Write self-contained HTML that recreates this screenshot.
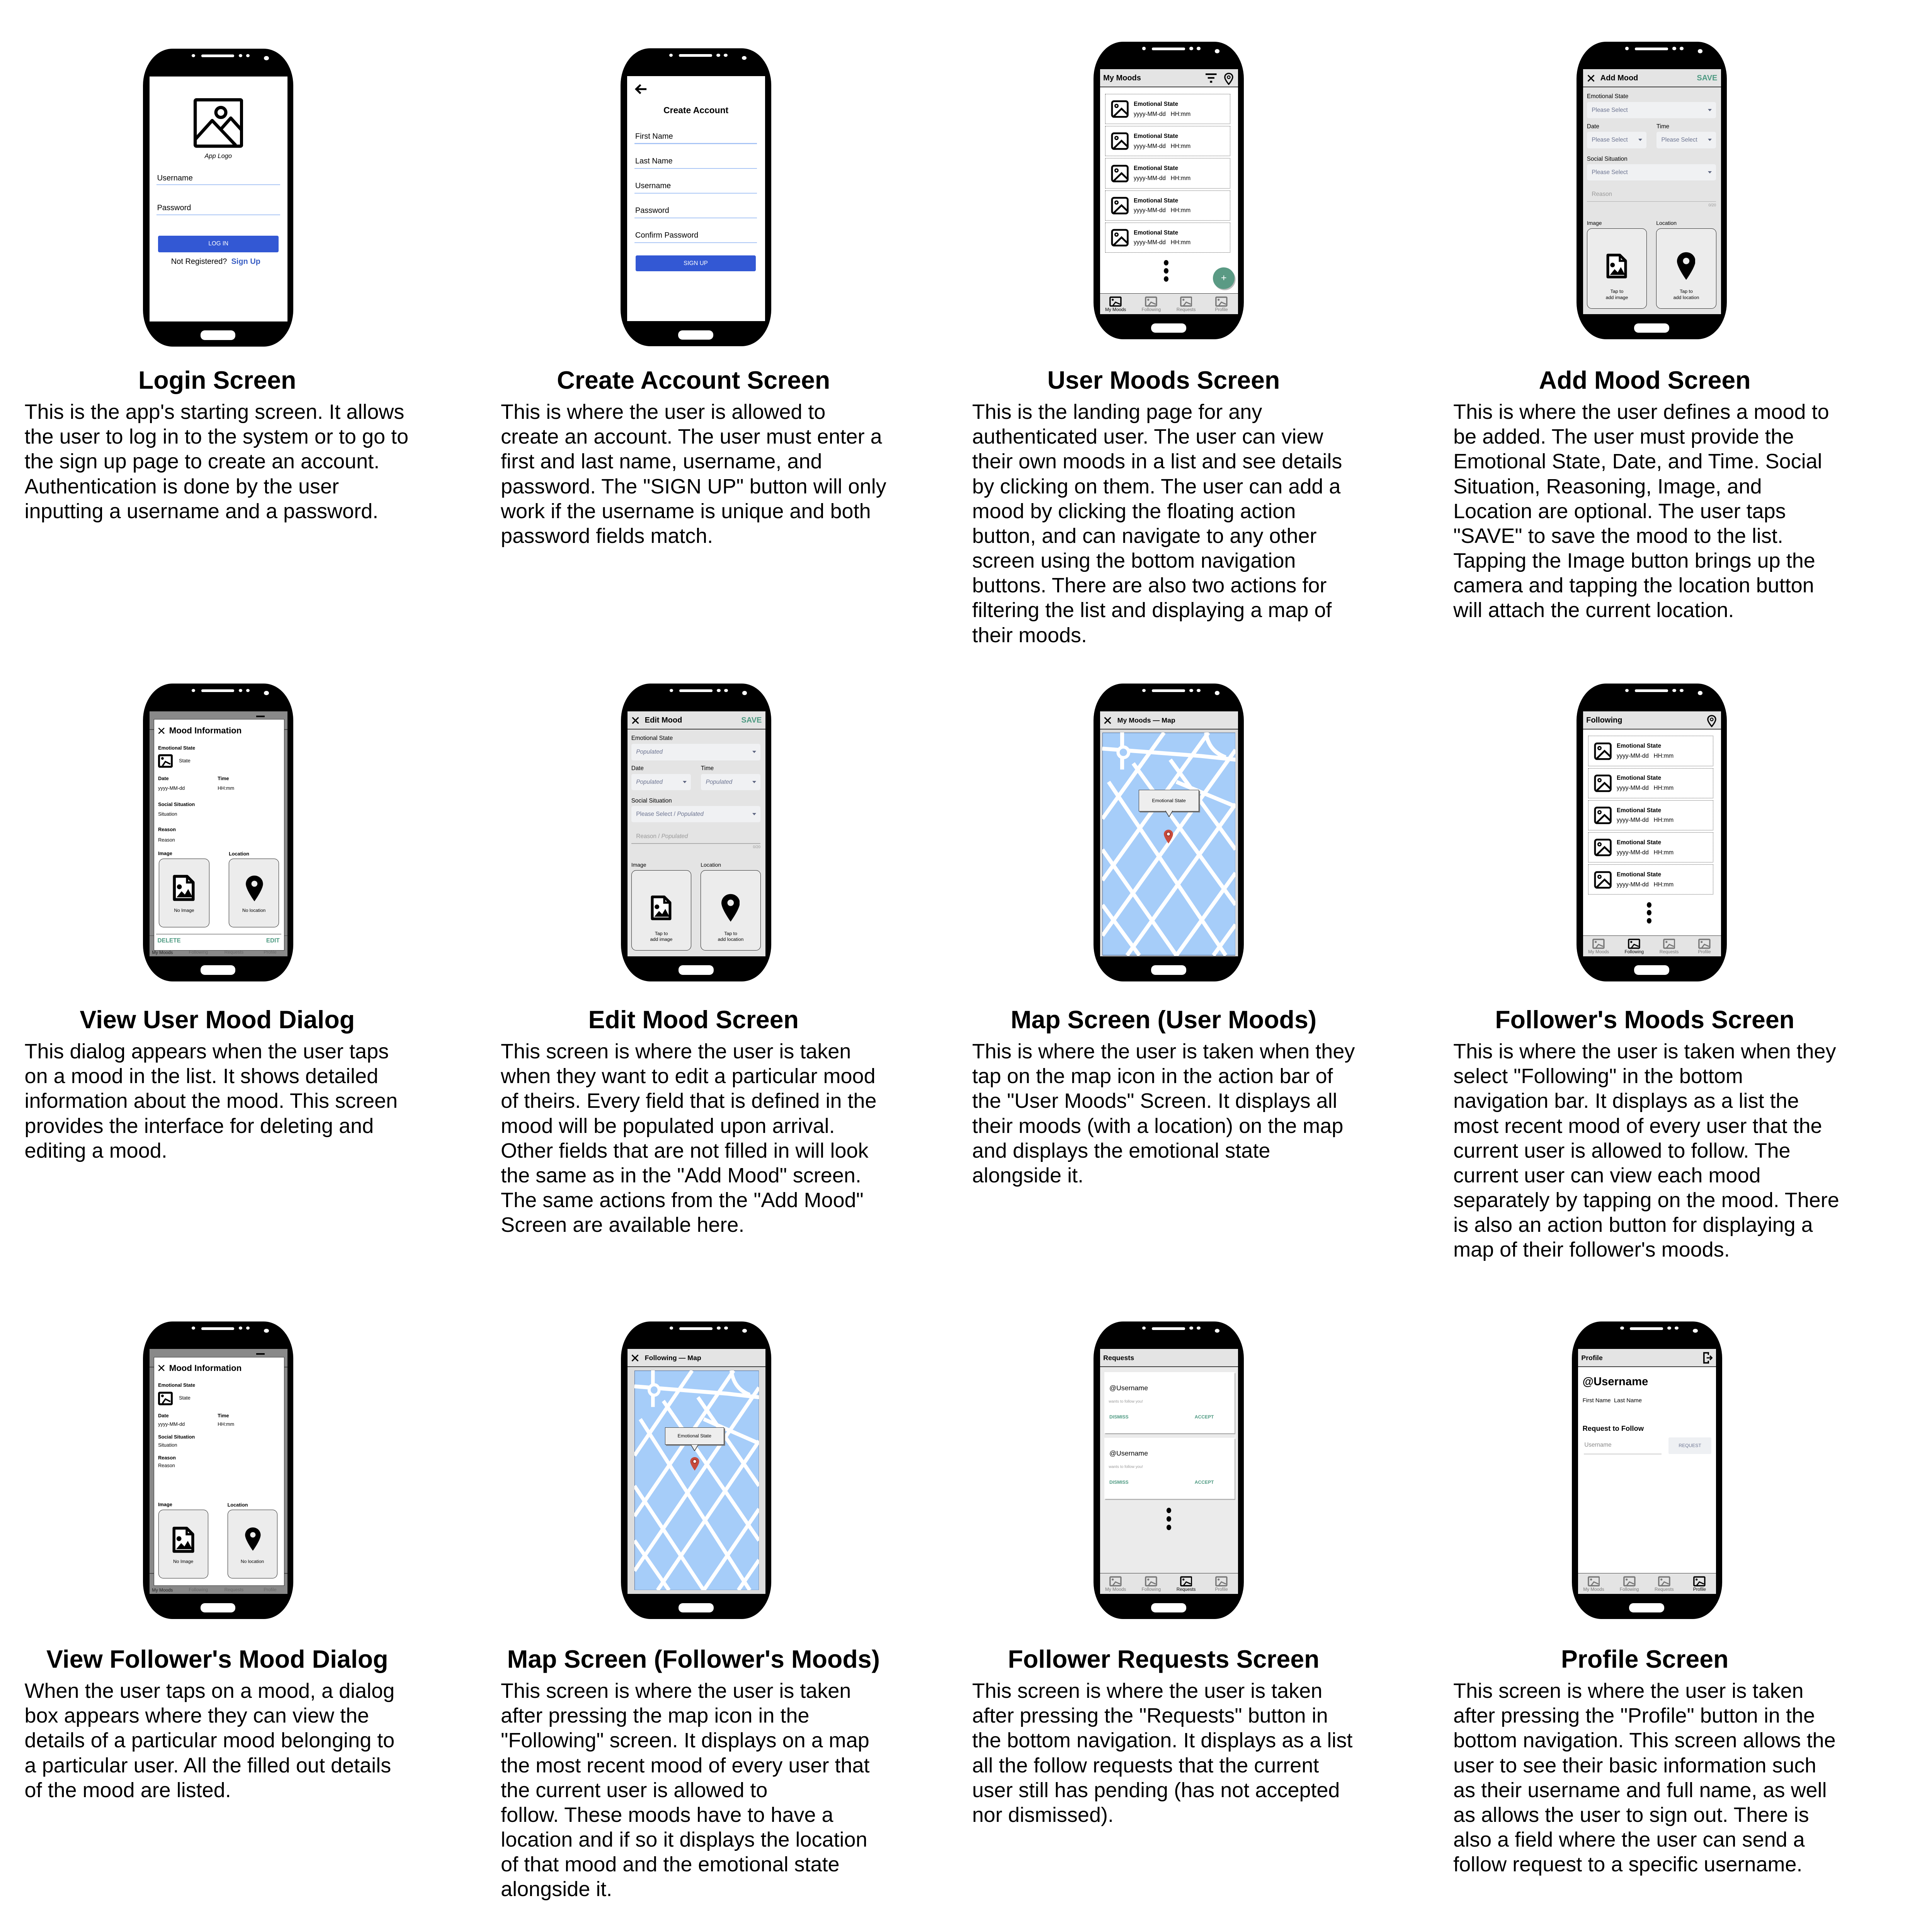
<!DOCTYPE html>
<html><head><meta charset="utf-8"><style>
*{margin:0;padding:0;box-sizing:border-box}
html,body{width:100vw;height:100vh;overflow:hidden;background:#fff}
body{font-family:"Liberation Sans",Arial,sans-serif;position:relative;color:#000}
#s{position:absolute;left:0;top:0;width:1530px;height:1574px;zoom:3.694118;overflow:hidden}
.a{position:absolute}
.x{position:absolute;line-height:1.2;white-space:nowrap}
.t{position:absolute;font-weight:bold;font-size:20.3px;line-height:24px;white-space:nowrap;transform:translateX(-50%)}
.b{position:absolute;font-size:17px;line-height:20.2px;white-space:nowrap}
.ph{position:absolute;width:122.5px;height:242.5px;background:#000;border-radius:24px/30px}
.sc{position:absolute;left:5.3px;top:22.5px;width:112.3px;height:199.5px;background:#fff;overflow:hidden}
.w{position:absolute;background:#fff}
.hd{position:absolute;left:0;top:0;width:100%;height:14.8px;background:#e4e4e4;border-bottom:.7px solid #333}
.ht{position:absolute;top:0;font-weight:bold;font-size:6.3px;line-height:14.8px;white-space:nowrap}
.it{position:absolute;left:4px;width:102px;height:24.6px;border:.45px dotted #333}
.it svg{position:absolute;left:4.3px;top:4.8px;width:14.6px;height:14.6px}
.it .e{position:absolute;left:23px;top:5.3px;font-size:4.8px;font-weight:bold;white-space:nowrap}
.it .y{position:absolute;left:23px;top:13.4px;font-size:4.8px;white-space:nowrap}
.nv{position:absolute;left:0;top:182.5px;width:100%;height:17px;background:#e4e4e4;border-top:.6px solid #333}
.ni{position:absolute;top:2.2px;width:10px;height:8.5px}
.nl{position:absolute;top:11px;font-size:3.7px;white-space:nowrap;transform:translateX(-50%);color:#777}
.dt{position:absolute;width:3.8px;height:4.4px;background:#000;border-radius:50%}
.sel{position:absolute;background:#f0f1f3;border-radius:1.5px}
.sel span{position:absolute;left:4px;top:50%;transform:translateY(-50%);font-size:4.8px;color:#6b7390;white-space:nowrap}
.sel i{position:absolute;right:3.5px;top:50%;margin-top:-1px;width:0;height:0;border-left:1.8px solid transparent;border-right:1.8px solid transparent;border-top:2.2px solid #5d6580}
.bx{position:absolute;background:#ececec;border:.5px solid #222;border-radius:4px}
.g{color:#4e9a82;font-weight:bold}
.lb{position:absolute;font-size:4.8px;white-space:nowrap;line-height:1.2}
</style></head><body><div id="s">

<div class="t" style="left:177px;top:297.8px">Login Screen</div>
<div class="t" style="left:565px;top:297.8px">Create Account Screen</div>
<div class="t" style="left:948px;top:297.8px">User Moods Screen</div>
<div class="t" style="left:1340px;top:297.8px">Add Mood Screen</div>

<div class="b" style="left:20px;top:325.5px">This is the app's starting screen. It allows<br>the user to log in to the system or to go to<br>the sign up page to create an account.<br>Authentication is done by the user<br>inputting a username and a password.</div>
<div class="b" style="left:408px;top:325.5px">This is where the user is allowed to<br>create an account. The user must enter a<br>first and last name, username, and<br>password. The "SIGN UP" button will only<br>work if the username is unique and both<br>password fields match.</div>
<div class="b" style="left:792px;top:325.5px">This is the landing page for any<br>authenticated user. The user can view<br>their own moods in a list and see details<br>by clicking on them. The user can add a<br>mood by clicking the floating action<br>button, and can navigate to any other<br>screen using the bottom navigation<br>buttons. There are also two actions for<br>filtering the list and displaying a map of<br>their moods.</div>
<div class="b" style="left:1184px;top:325.5px">This is where the user defines a mood to<br>be added. The user must provide the<br>Emotional State, Date, and Time. Social<br>Situation, Reasoning, Image, and<br>Location are optional. The user taps<br>"SAVE" to save the mood to the list.<br>Tapping the Image button brings up the<br>camera and tapping the location button<br>will attach the current location.</div>

<div class="t" style="left:177px;top:818.8px">View User Mood Dialog</div>
<div class="t" style="left:565px;top:818.8px">Edit Mood Screen</div>
<div class="t" style="left:948px;top:818.8px">Map Screen (User Moods)</div>
<div class="t" style="left:1340px;top:818.8px">Follower's Moods Screen</div>

<div class="b" style="left:20px;top:846.5px">This dialog appears when the user taps<br>on a mood in the list. It shows detailed<br>information about the mood. This screen<br>provides the interface for deleting and<br>editing a mood.</div>
<div class="b" style="left:408px;top:846.5px">This screen is where the user is taken<br>when they want to edit a particular mood<br>of theirs. Every field that is defined in the<br>mood will be populated upon arrival.<br>Other fields that are not filled in will look<br>the same as in the "Add Mood" screen.<br>The same actions from the "Add Mood"<br>Screen are available here.</div>
<div class="b" style="left:792px;top:846.5px">This is where the user is taken when they<br>tap on the map icon in the action bar of<br>the "User Moods" Screen. It displays all<br>their moods (with a location) on the map<br>and displays the emotional state<br>alongside it.</div>
<div class="b" style="left:1184px;top:846.5px">This is where the user is taken when they<br>select "Following" in the bottom<br>navigation bar. It displays as a list the<br>most recent mood of every user that the<br>current user is allowed to follow. The<br>current user can view each mood<br>separately by tapping on the mood. There<br>is also an action button for displaying a<br>map of their follower's moods.</div>

<div class="t" style="left:177px;top:1339.8px">View Follower's Mood Dialog</div>
<div class="t" style="left:565px;top:1339.8px">Map Screen (Follower's Moods)</div>
<div class="t" style="left:948px;top:1339.8px">Follower Requests Screen</div>
<div class="t" style="left:1340px;top:1339.8px">Profile Screen</div>

<div class="b" style="left:20px;top:1367.5px">When the user taps on a mood, a dialog<br>box appears where they can view the<br>details of a particular mood belonging to<br>a particular user. All the filled out details<br>of the mood are listed.</div>
<div class="b" style="left:408px;top:1367.5px">This screen is where the user is taken<br>after pressing the map icon in the<br>"Following" screen. It displays on a map<br>the most recent mood of every user that<br>the current user is allowed to<br>follow. These moods have to have a<br>location and if so it displays the location<br>of that mood and the emotional state<br>alongside it.</div>
<div class="b" style="left:792px;top:1367.5px">This screen is where the user is taken<br>after pressing the "Requests" button in<br>the bottom navigation. It displays as a list<br>all the follow requests that the current<br>user still has pending (has not accepted<br>nor dismissed).</div>
<div class="b" style="left:1184px;top:1367.5px">This screen is where the user is taken<br>after pressing the "Profile" button in the<br>bottom navigation. This screen allows the<br>user to see their basic information such<br>as their username and full name, as well<br>as allows the user to sign out. There is<br>also a field where the user can send a<br>follow request to a specific username.</div>

<!-- PHONE 1: LOGIN -->
<div class="ph" style="left:116.5px;top:39.8px">
<div class="w" style="left:39.5px;top:4.2px;width:3px;height:2.6px;border-radius:50%"></div><div class="w" style="left:47.4px;top:4.7px;width:27px;height:2.2px;border-radius:1px"></div><div class="w" style="left:78px;top:4.2px;width:3px;height:2.6px;border-radius:50%"></div><div class="w" style="left:84px;top:4.2px;width:3px;height:2.6px;border-radius:50%"></div><div class="w" style="left:98.6px;top:6px;width:4px;height:3.4px;border-radius:50%"></div>
<div class="w" style="left:46.8px;top:229.5px;width:28.5px;height:7.6px;border-radius:3.5px"></div>
<div class="sc">
 <svg class="a" style="left:35.8px;top:17.7px;width:40.4px;height:40.5px" viewBox="0 0 40 40"><rect x="1.3" y="1.3" width="37.4" height="37.4" rx="1" fill="none" stroke="#000" stroke-width="2.6"/><circle cx="22" cy="11.5" r="4" fill="none" stroke="#000" stroke-width="2.6"/><path d="M1.5 33L15 18l19 20M22 25l8-9 9 10" fill="none" stroke="#000" stroke-width="2.6" stroke-linejoin="round"/></svg>
 <div class="x" style="left:0;width:112px;text-align:center;top:62.2px;font-size:5.2px;font-style:italic">App Logo</div>
 <div class="x" style="left:6.2px;top:78.9px;font-size:6.3px">Username</div>
 <div class="a" style="left:5.7px;top:87.8px;width:100.8px;height:.7px;background:#a7c4f5"></div>
 <div class="x" style="left:6.2px;top:103.2px;font-size:6.3px">Password</div>
 <div class="a" style="left:5.7px;top:112.5px;width:100.8px;height:.7px;background:#a7c4f5"></div>
 <div class="a" style="left:7px;top:129.7px;width:98.3px;height:13.5px;background:#3358d4;border-radius:1.2px;color:#fff;font-size:4.8px;text-align:center;line-height:13.5px">LOG IN</div>
 <div class="x" style="left:17.6px;top:147px;font-size:6.3px">Not Registered?&nbsp; <span style="color:#3a5fc4;font-weight:bold">Sign Up</span></div>
</div></div>

<!-- PHONE 2: CREATE ACCOUNT -->
<div class="ph" style="left:505.7px;top:39.5px">
<div class="w" style="left:39.5px;top:4.2px;width:3px;height:2.6px;border-radius:50%"></div><div class="w" style="left:47.4px;top:4.7px;width:27px;height:2.2px;border-radius:1px"></div><div class="w" style="left:78px;top:4.2px;width:3px;height:2.6px;border-radius:50%"></div><div class="w" style="left:84px;top:4.2px;width:3px;height:2.6px;border-radius:50%"></div><div class="w" style="left:98.6px;top:6px;width:4px;height:3.4px;border-radius:50%"></div>
<div class="w" style="left:46.8px;top:229.5px;width:28.5px;height:7.6px;border-radius:3.5px"></div>
<div class="sc">
 <svg class="a" style="left:6px;top:6.2px;width:10px;height:8.6px" viewBox="0 0 10 9"><path d="M10 4.5H2M5 .8L1.2 4.5 5 8.2" fill="none" stroke="#000" stroke-width="1.6"/></svg>
 <div class="x" style="left:0;width:112px;text-align:center;top:23.6px;font-size:7.2px;font-weight:bold">Create Account</div>
 <div class="x" style="left:6.5px;top:45.2px;font-size:6.3px">First Name</div><div class="a" style="left:6px;top:54.6px;width:99.6px;height:.7px;background:#a7c4f5"></div>
 <div class="x" style="left:6.5px;top:65.4px;font-size:6.3px">Last Name</div><div class="a" style="left:6px;top:74.8px;width:99.6px;height:.7px;background:#a7c4f5"></div>
 <div class="x" style="left:6.5px;top:85.6px;font-size:6.3px">Username</div><div class="a" style="left:6px;top:95px;width:99.6px;height:.7px;background:#a7c4f5"></div>
 <div class="x" style="left:6.5px;top:105.8px;font-size:6.3px">Password</div><div class="a" style="left:6px;top:115.2px;width:99.6px;height:.7px;background:#a7c4f5"></div>
 <div class="x" style="left:6.5px;top:126px;font-size:6.3px">Confirm Password</div><div class="a" style="left:6px;top:135.4px;width:99.6px;height:.7px;background:#a7c4f5"></div>
 <div class="a" style="left:7px;top:146px;width:97.6px;height:13px;background:#3358d4;border-radius:1.2px;color:#fff;font-size:4.8px;text-align:center;line-height:13px">SIGN UP</div>
</div></div>

<!-- PHONE 3: USER MOODS -->
<div class="ph" style="left:891px;top:34px">
<div class="w" style="left:39.5px;top:4.2px;width:3px;height:2.6px;border-radius:50%"></div><div class="w" style="left:47.4px;top:4.7px;width:27px;height:2.2px;border-radius:1px"></div><div class="w" style="left:78px;top:4.2px;width:3px;height:2.6px;border-radius:50%"></div><div class="w" style="left:84px;top:4.2px;width:3px;height:2.6px;border-radius:50%"></div><div class="w" style="left:98.6px;top:6px;width:4px;height:3.4px;border-radius:50%"></div>
<div class="w" style="left:46.8px;top:229.5px;width:28.5px;height:7.6px;border-radius:3.5px"></div>
<div class="sc">
 <div class="hd"><div class="ht" style="left:2.5px">My Moods</div>
  <svg class="a" style="left:86px;top:3.3px;width:9px;height:8px" viewBox="0 0 9 8"><rect x="0" y="0" width="9" height="1.3"/><rect x="1.8" y="3" width="5.4" height="1.3"/><rect x="3.6" y="6" width="1.8" height="1.6"/></svg>
  <svg class="a" style="left:101px;top:2.8px;width:7.5px;height:10px" viewBox="0 0 8 10.5"><path d="M4 .6C2 .6.6 2 .6 3.9.6 6 4 10 4 10s3.4-4 3.4-6.1C7.4 2 6 .6 4 .6z" fill="none" stroke="#000" stroke-width="1.1"/><circle cx="4" cy="3.9" r="1.2" fill="none" stroke="#000" stroke-width=".8"/></svg>
 </div>
 <div class="it" style="top:20px"><svg viewBox="0 0 16 16"><rect x="1" y="1" width="14" height="14" rx="1.8" fill="none" stroke="#000" stroke-width="1.6"/><circle cx="5" cy="5.2" r="1.3" fill="none" stroke="#000" stroke-width="1.2"/><path d="M2 15L9.5 7.7 15 13" fill="none" stroke="#000" stroke-width="1.6"/></svg><div class="e">Emotional State</div><div class="y">yyyy-MM-dd&nbsp;&nbsp; HH:mm</div></div>
 <div class="it" style="top:46.2px"><svg viewBox="0 0 16 16"><rect x="1" y="1" width="14" height="14" rx="1.8" fill="none" stroke="#000" stroke-width="1.6"/><circle cx="5" cy="5.2" r="1.3" fill="none" stroke="#000" stroke-width="1.2"/><path d="M2 15L9.5 7.7 15 13" fill="none" stroke="#000" stroke-width="1.6"/></svg><div class="e">Emotional State</div><div class="y">yyyy-MM-dd&nbsp;&nbsp; HH:mm</div></div>
 <div class="it" style="top:72.4px"><svg viewBox="0 0 16 16"><rect x="1" y="1" width="14" height="14" rx="1.8" fill="none" stroke="#000" stroke-width="1.6"/><circle cx="5" cy="5.2" r="1.3" fill="none" stroke="#000" stroke-width="1.2"/><path d="M2 15L9.5 7.7 15 13" fill="none" stroke="#000" stroke-width="1.6"/></svg><div class="e">Emotional State</div><div class="y">yyyy-MM-dd&nbsp;&nbsp; HH:mm</div></div>
 <div class="it" style="top:98.6px"><svg viewBox="0 0 16 16"><rect x="1" y="1" width="14" height="14" rx="1.8" fill="none" stroke="#000" stroke-width="1.6"/><circle cx="5" cy="5.2" r="1.3" fill="none" stroke="#000" stroke-width="1.2"/><path d="M2 15L9.5 7.7 15 13" fill="none" stroke="#000" stroke-width="1.6"/></svg><div class="e">Emotional State</div><div class="y">yyyy-MM-dd&nbsp;&nbsp; HH:mm</div></div>
 <div class="it" style="top:124.8px"><svg viewBox="0 0 16 16"><rect x="1" y="1" width="14" height="14" rx="1.8" fill="none" stroke="#000" stroke-width="1.6"/><circle cx="5" cy="5.2" r="1.3" fill="none" stroke="#000" stroke-width="1.2"/><path d="M2 15L9.5 7.7 15 13" fill="none" stroke="#000" stroke-width="1.6"/></svg><div class="e">Emotional State</div><div class="y">yyyy-MM-dd&nbsp;&nbsp; HH:mm</div></div>
 <div class="dt" style="left:51.9px;top:155.5px"></div><div class="dt" style="left:51.9px;top:162px"></div><div class="dt" style="left:51.9px;top:168.6px"></div>
 <div class="a" style="left:92px;top:161.5px;width:17.5px;height:17.5px;border-radius:50%;background:#5a9a84;box-shadow:.8px 1px 0 #bbb;color:#fff;font-size:8px;line-height:17px;text-align:center">+</div>
 <div class="nv">
  <svg class="ni" style="left:7.6px" viewBox="0 0 12 10"><rect x=".7" y=".7" width="10.6" height="8.6" rx=".6" fill="none" stroke="#000" stroke-width="1.3"/><circle cx="3.3" cy="3.2" r="1" fill="#000"/><path d="M3.4 9L6 5.6 10.5 7.6" fill="none" stroke="#000" stroke-width="1.1"/></svg><div class="nl" style="left:12.6px;color:#000">My Moods</div>
  <svg class="ni" style="left:36.6px" viewBox="0 0 12 10"><rect x=".7" y=".7" width="10.6" height="8.6" rx=".6" fill="none" stroke="#777" stroke-width="1.3"/><circle cx="3.3" cy="3.2" r="1" fill="#777"/><path d="M3.4 9L6 5.6 10.5 7.6" fill="none" stroke="#777" stroke-width="1.1"/></svg><div class="nl" style="left:41.6px">Following</div>
  <svg class="ni" style="left:65px" viewBox="0 0 12 10"><rect x=".7" y=".7" width="10.6" height="8.6" rx=".6" fill="none" stroke="#777" stroke-width="1.3"/><circle cx="3.3" cy="3.2" r="1" fill="#777"/><path d="M3.4 9L6 5.6 10.5 7.6" fill="none" stroke="#777" stroke-width="1.1"/></svg><div class="nl" style="left:70px">Requests</div>
  <svg class="ni" style="left:93.8px" viewBox="0 0 12 10"><rect x=".7" y=".7" width="10.6" height="8.6" rx=".6" fill="none" stroke="#777" stroke-width="1.3"/><circle cx="3.3" cy="3.2" r="1" fill="#777"/><path d="M3.4 9L6 5.6 10.5 7.6" fill="none" stroke="#777" stroke-width="1.1"/></svg><div class="nl" style="left:98.8px">Profile</div>
 </div>
</div></div>

<!-- PHONE 4: ADD MOOD -->
<div class="ph" style="left:1284.5px;top:34px">
<div class="w" style="left:39.5px;top:4.2px;width:3px;height:2.6px;border-radius:50%"></div><div class="w" style="left:47.4px;top:4.7px;width:27px;height:2.2px;border-radius:1px"></div><div class="w" style="left:78px;top:4.2px;width:3px;height:2.6px;border-radius:50%"></div><div class="w" style="left:84px;top:4.2px;width:3px;height:2.6px;border-radius:50%"></div><div class="w" style="left:98.6px;top:6px;width:4px;height:3.4px;border-radius:50%"></div>
<div class="w" style="left:46.8px;top:229.5px;width:28.5px;height:7.6px;border-radius:3.5px"></div>
<div class="sc" style="background:#e4e4e4">
 <div class="hd"><svg class="a" style="left:3.5px;top:4.3px;width:6px;height:6px" viewBox="0 0 6 6"><path d="M.5.5l5 5M5.5.5l-5 5" stroke="#000" stroke-width="1"/></svg><div class="ht" style="left:14px">Add Mood</div><div class="ht g" style="right:3px;color:#4e9a82">SAVE</div></div>
 <div class="lb" style="left:3px;top:19.4px">Emotional State</div>
 <div class="sel" style="left:3px;top:26.6px;width:105.3px;height:13.3px"><span>Please Select</span><i></i></div>
 <div class="lb" style="left:3px;top:43.8px">Date</div><div class="lb" style="left:59.7px;top:43.8px">Time</div>
 <div class="sel" style="left:3px;top:50.9px;width:48.6px;height:13.4px"><span>Please Select</span><i></i></div>
 <div class="sel" style="left:59.7px;top:50.9px;width:48.6px;height:13.4px"><span>Please Select</span><i></i></div>
 <div class="lb" style="left:3px;top:70.4px">Social Situation</div>
 <div class="sel" style="left:3px;top:77.3px;width:105.3px;height:13.1px"><span>Please Select</span><i></i></div>
 <div class="lb" style="left:7px;top:99.1px;color:#999">Reason</div>
 <div class="a" style="left:3px;top:107.4px;width:105.3px;height:.5px;background:#aaa"></div>
 <div class="x" style="right:4px;top:109px;font-size:3.2px;color:#999">0/20</div>
 <div class="lb" style="left:3px;top:122.5px;font-size:4.4px">Image</div><div class="lb" style="left:59.5px;top:122.5px;font-size:4.4px">Location</div>
 <div class="bx" style="left:3px;top:129.4px;width:49px;height:65.6px"><svg class="a" style="left:15.5px;top:19px;width:17px;height:23px" viewBox="0 0 20 24"><path d="M1.5 1.5H13L18.5 7V22.5H1.5Z" fill="#fff" stroke="#000" stroke-width="2.6" stroke-linejoin="round"/><path d="M13 1.5V7H18.5" fill="none" stroke="#000" stroke-width="2"/><circle cx="6" cy="11" r="2.2"/><path d="M3.5 20.5L8 15l3 3 3-5 4 7.5z"/></svg><div class="x" style="left:0;width:100%;text-align:center;top:49px;font-size:3.9px;line-height:5px">Tap to<br>add image</div></div>
 <div class="bx" style="left:59.5px;top:129.4px;width:49px;height:65.6px"><svg class="a" style="left:16.5px;top:19px;width:15px;height:23px" viewBox="0 0 16 24"><path d="M8 0C3.6 0 0 3.4 0 7.8 0 13 8 24 8 24s8-11 8-16.2C16 3.4 12.4 0 8 0z"/><circle cx="8" cy="7.6" r="2.8" fill="#ececec"/></svg><div class="x" style="left:0;width:100%;text-align:center;top:49px;font-size:3.9px;line-height:5px">Tap to<br>add location</div></div>
</div></div>

<!-- ROW 2 PHONE 1: VIEW MOOD DIALOG -->
<div class="ph" style="left:116.5px;top:557px">
<div class="w" style="left:39.5px;top:4.2px;width:3px;height:2.6px;border-radius:50%"></div><div class="w" style="left:47.4px;top:4.7px;width:27px;height:2.2px;border-radius:1px"></div><div class="w" style="left:78px;top:4.2px;width:3px;height:2.6px;border-radius:50%"></div><div class="w" style="left:84px;top:4.2px;width:3px;height:2.6px;border-radius:50%"></div><div class="w" style="left:98.6px;top:6px;width:4px;height:3.4px;border-radius:50%"></div>
<div class="w" style="left:46.8px;top:229.5px;width:28.5px;height:7.6px;border-radius:3.5px"></div>
<div class="sc" style="background:#898989">
 <div class="a" style="left:0;top:14.6px;width:100%;height:.6px;background:#444"></div>
 <div class="a" style="left:0;top:182.5px;width:100%;height:.6px;background:#444"></div>
 <div class="a" style="left:87px;top:3.5px;width:7px;height:1.3px;background:#000"></div>
 <div class="x" style="left:2px;top:194.5px;font-size:3.7px;color:#222">My Moods</div><div class="x" style="left:32px;top:194.2px;font-size:3.7px;color:#666">Following</div><div class="x" style="left:61px;top:194.2px;font-size:3.7px;color:#666">Requests</div><div class="x" style="left:93px;top:194.2px;font-size:3.7px;color:#666">Profile</div>
 <div class="a" style="left:3.5px;top:6.5px;width:106.5px;height:188.5px;background:#fff;border:.4px solid #333"></div>
 <svg class="a" style="left:7px;top:12.6px;width:5.5px;height:6.5px" viewBox="0 0 6 6"><path d="M.5.5l5 5M5.5.5l-5 5" stroke="#000" stroke-width=".9"/></svg>
 <div class="x" style="left:16px;top:11.8px;font-size:7px;font-weight:bold">Mood Information</div>
 <div class="x" style="left:7px;top:27.6px;font-size:4px;font-weight:bold">Emotional State</div>
 <svg class="a" style="left:7px;top:35px;width:12px;height:11px" viewBox="0 0 12 11"><rect x=".8" y=".8" width="10.4" height="9.4" rx=".6" fill="none" stroke="#000" stroke-width="1.6"/><circle cx="3.6" cy="3.4" r="1.1"/><path d="M3.6 9.5L6 6l4 2" fill="none" stroke="#000" stroke-width="1.2"/></svg>
 <div class="x" style="left:24px;top:38.1px;font-size:4px">State</div>
 <div class="x" style="left:7px;top:52.6px;font-size:4px;font-weight:bold">Date</div><div class="x" style="left:55.5px;top:52.6px;font-size:4px;font-weight:bold">Time</div>
 <div class="x" style="left:7px;top:60.6px;font-size:4px">yyyy-MM-dd</div><div class="x" style="left:55.5px;top:60.6px;font-size:4px">HH:mm</div>
 <div class="x" style="left:7px;top:73.6px;font-size:4px;font-weight:bold">Social Situation</div>
 <div class="x" style="left:7px;top:81.6px;font-size:4px">Situation</div>
 <div class="x" style="left:7px;top:94.2px;font-size:4px;font-weight:bold">Reason</div>
 <div class="x" style="left:7px;top:102.6px;font-size:4px">Reason</div>
 <div class="x" style="left:7px;top:113.6px;font-size:4px;font-weight:bold">Image</div><div class="x" style="left:64.6px;top:113.9px;font-size:4px;font-weight:bold">Location</div>
 <div class="bx" style="left:7.7px;top:120px;width:41px;height:56px"><svg class="a" style="left:11px;top:12.5px;width:18px;height:22px" viewBox="0 0 20 24"><path d="M1.5 1.5H13L18.5 7V22.5H1.5Z" fill="#fff" stroke="#000" stroke-width="2.6" stroke-linejoin="round"/><path d="M13 1.5V7H18.5" fill="none" stroke="#000" stroke-width="2"/><circle cx="6" cy="11" r="2.2"/><path d="M3.5 20.5L8 15l3 3 3-5 4 7.5z"/></svg><div class="x" style="left:0;width:100%;text-align:center;top:39.8px;font-size:3.8px">No Image</div></div>
 <div class="bx" style="left:64.6px;top:120px;width:41px;height:56px"><svg class="a" style="left:12.5px;top:13.5px;width:16px;height:21px" viewBox="0 0 16 24"><path d="M8 0C3.6 0 0 3.4 0 7.8 0 13 8 24 8 24s8-11 8-16.2C16 3.4 12.4 0 8 0z"/><circle cx="8" cy="7.6" r="2.8" fill="#ececec"/></svg><div class="x" style="left:0;width:100%;text-align:center;top:39.8px;font-size:3.8px">No location</div></div>
 <div class="a" style="left:5.5px;top:181.3px;width:102px;height:.5px;background:#333"></div>
 <div class="x g" style="left:6.5px;top:184.3px;font-size:4.8px">DELETE</div><div class="x g" style="right:6.3px;top:184.3px;font-size:4.8px">EDIT</div>
</div></div>

<!-- ROW 2 PHONE 2: EDIT MOOD -->
<div class="ph" style="left:506px;top:557px">
<div class="w" style="left:39.5px;top:4.2px;width:3px;height:2.6px;border-radius:50%"></div><div class="w" style="left:47.4px;top:4.7px;width:27px;height:2.2px;border-radius:1px"></div><div class="w" style="left:78px;top:4.2px;width:3px;height:2.6px;border-radius:50%"></div><div class="w" style="left:84px;top:4.2px;width:3px;height:2.6px;border-radius:50%"></div><div class="w" style="left:98.6px;top:6px;width:4px;height:3.4px;border-radius:50%"></div>
<div class="w" style="left:46.8px;top:229.5px;width:28.5px;height:7.6px;border-radius:3.5px"></div>
<div class="sc" style="background:#e4e4e4">
 <div class="hd"><svg class="a" style="left:3.5px;top:4.3px;width:6px;height:6px" viewBox="0 0 6 6"><path d="M.5.5l5 5M5.5.5l-5 5" stroke="#000" stroke-width="1"/></svg><div class="ht" style="left:14px">Edit Mood</div><div class="ht g" style="right:3px;color:#4e9a82">SAVE</div></div>
 <div class="lb" style="left:3px;top:19.4px">Emotional State</div>
 <div class="sel" style="left:3px;top:26.6px;width:105.3px;height:13.3px"><span style="font-style:italic">Populated</span><i></i></div>
 <div class="lb" style="left:3px;top:43.8px">Date</div><div class="lb" style="left:59.7px;top:43.8px">Time</div>
 <div class="sel" style="left:3px;top:50.9px;width:48.6px;height:13.4px"><span style="font-style:italic">Populated</span><i></i></div>
 <div class="sel" style="left:59.7px;top:50.9px;width:48.6px;height:13.4px"><span style="font-style:italic">Populated</span><i></i></div>
 <div class="lb" style="left:3px;top:70.4px">Social Situation</div>
 <div class="sel" style="left:3px;top:77.3px;width:105.3px;height:13.1px"><span>Please Select / <em>Populated</em></span><i></i></div>
 <div class="lb" style="left:7px;top:99.1px;color:#999">Reason / <em>Populated</em></div>
 <div class="a" style="left:3px;top:107.4px;width:105.3px;height:.5px;background:#aaa"></div>
 <div class="x" style="right:4px;top:109px;font-size:3.2px;color:#999">0/20</div>
 <div class="lb" style="left:3px;top:122.5px;font-size:4.4px">Image</div><div class="lb" style="left:59.5px;top:122.5px;font-size:4.4px">Location</div>
 <div class="bx" style="left:3px;top:129.4px;width:49px;height:65.6px"><svg class="a" style="left:15.5px;top:19px;width:17px;height:23px" viewBox="0 0 20 24"><path d="M1.5 1.5H13L18.5 7V22.5H1.5Z" fill="#fff" stroke="#000" stroke-width="2.6" stroke-linejoin="round"/><path d="M13 1.5V7H18.5" fill="none" stroke="#000" stroke-width="2"/><circle cx="6" cy="11" r="2.2"/><path d="M3.5 20.5L8 15l3 3 3-5 4 7.5z"/></svg><div class="x" style="left:0;width:100%;text-align:center;top:49px;font-size:3.9px;line-height:5px">Tap to<br>add image</div></div>
 <div class="bx" style="left:59.5px;top:129.4px;width:49px;height:65.6px"><svg class="a" style="left:16.5px;top:19px;width:15px;height:23px" viewBox="0 0 16 24"><path d="M8 0C3.6 0 0 3.4 0 7.8 0 13 8 24 8 24s8-11 8-16.2C16 3.4 12.4 0 8 0z"/><circle cx="8" cy="7.6" r="2.8" fill="#ececec"/></svg><div class="x" style="left:0;width:100%;text-align:center;top:49px;font-size:3.9px;line-height:5px">Tap to<br>add location</div></div>
</div></div>

<!-- ROW 2 PHONE 3: MAP -->
<div class="ph" style="left:891px;top:557px">
<div class="w" style="left:39.5px;top:4.2px;width:3px;height:2.6px;border-radius:50%"></div><div class="w" style="left:47.4px;top:4.7px;width:27px;height:2.2px;border-radius:1px"></div><div class="w" style="left:78px;top:4.2px;width:3px;height:2.6px;border-radius:50%"></div><div class="w" style="left:84px;top:4.2px;width:3px;height:2.6px;border-radius:50%"></div><div class="w" style="left:98.6px;top:6px;width:4px;height:3.4px;border-radius:50%"></div>
<div class="w" style="left:46.8px;top:229.5px;width:28.5px;height:7.6px;border-radius:3.5px"></div>
<div class="sc" style="background:#dcdcdc">
 <div class="hd"><svg class="a" style="left:3px;top:4.3px;width:6px;height:6px" viewBox="0 0 6 6"><path d="M.5.5l5 5M5.5.5l-5 5" stroke="#000" stroke-width="1"/></svg><div class="ht" style="left:14px;font-size:5.6px">My Moods — Map</div></div>
 <svg class="a" style="left:1.7px;top:17.5px;width:108.5px;height:181.5px" viewBox="0 0 108 181" preserveAspectRatio="none"><rect width="108" height="181" fill="#a6cdf9" stroke="#3d5a88" stroke-width=".6"/><g fill="none" stroke="#fff" stroke-width="3.2"><path d="M0 13L40 16 80 19 108 22"/><path d="M16 0V30"/><path d="M84 0Q86 15 100 20"/><path d="M0 70L50 0"/><path d="M0 120L86 0"/><path d="M0 165L108 14"/><path d="M20 181L108 58"/><path d="M60 181L108 114"/><path d="M90 181L108 156"/><path d="M5 40L100 181"/><path d="M25 25L108 140"/><path d="M55 22L108 95"/><path d="M0 95L60 181"/><path d="M0 140L30 181"/><path d="M60 40L108 60"/></g><circle cx="17" cy="16" r="4.3" fill="#a6cdf9" stroke="#fff" stroke-width="2.6"/></svg>
 <div class="a" style="left:31.5px;top:64px;width:49px;height:17.5px;background:#eee;border:.5px solid #333;box-shadow:.8px .8px 0 #777;font-size:3.9px;text-align:center;line-height:17px">Emotional State</div>
 <svg class="a" style="left:53px;top:81px;width:6px;height:5px" viewBox="0 0 6 5"><path d="M0 0L3 5 6 0" fill="#eee" stroke="#333" stroke-width=".5"/></svg>
 <svg class="a" style="left:52px;top:96px;width:7.5px;height:12px" viewBox="0 0 16 24"><path d="M8 0C3.6 0 0 3.4 0 7.8 0 13 8 24 8 24s8-11 8-16.2C16 3.4 12.4 0 8 0z" fill="#c84a3c"/><circle cx="8" cy="7.6" r="3.3" fill="#fff" stroke="#9b352b" stroke-width="1.5"/></svg>
</div></div>

<!-- ROW 2 PHONE 4: FOLLOWING -->
<div class="ph" style="left:1284.5px;top:557px">
<div class="w" style="left:39.5px;top:4.2px;width:3px;height:2.6px;border-radius:50%"></div><div class="w" style="left:47.4px;top:4.7px;width:27px;height:2.2px;border-radius:1px"></div><div class="w" style="left:78px;top:4.2px;width:3px;height:2.6px;border-radius:50%"></div><div class="w" style="left:84px;top:4.2px;width:3px;height:2.6px;border-radius:50%"></div><div class="w" style="left:98.6px;top:6px;width:4px;height:3.4px;border-radius:50%"></div>
<div class="w" style="left:46.8px;top:229.5px;width:28.5px;height:7.6px;border-radius:3.5px"></div>
<div class="sc">
 <div class="hd"><div class="ht" style="left:2.5px">Following</div>
  <svg class="a" style="left:101px;top:2.8px;width:7.5px;height:10px" viewBox="0 0 8 10.5"><path d="M4 .6C2 .6.6 2 .6 3.9.6 6 4 10 4 10s3.4-4 3.4-6.1C7.4 2 6 .6 4 .6z" fill="none" stroke="#000" stroke-width="1.1"/><circle cx="4" cy="3.9" r="1.2" fill="none" stroke="#000" stroke-width=".8"/></svg>
 </div>
 <div class="it" style="top:20px"><svg viewBox="0 0 16 16"><rect x="1" y="1" width="14" height="14" rx="1.8" fill="none" stroke="#000" stroke-width="1.6"/><circle cx="5" cy="5.2" r="1.3" fill="none" stroke="#000" stroke-width="1.2"/><path d="M2 15L9.5 7.7 15 13" fill="none" stroke="#000" stroke-width="1.6"/></svg><div class="e">Emotional State</div><div class="y">yyyy-MM-dd&nbsp;&nbsp; HH:mm</div></div>
 <div class="it" style="top:46.2px"><svg viewBox="0 0 16 16"><rect x="1" y="1" width="14" height="14" rx="1.8" fill="none" stroke="#000" stroke-width="1.6"/><circle cx="5" cy="5.2" r="1.3" fill="none" stroke="#000" stroke-width="1.2"/><path d="M2 15L9.5 7.7 15 13" fill="none" stroke="#000" stroke-width="1.6"/></svg><div class="e">Emotional State</div><div class="y">yyyy-MM-dd&nbsp;&nbsp; HH:mm</div></div>
 <div class="it" style="top:72.4px"><svg viewBox="0 0 16 16"><rect x="1" y="1" width="14" height="14" rx="1.8" fill="none" stroke="#000" stroke-width="1.6"/><circle cx="5" cy="5.2" r="1.3" fill="none" stroke="#000" stroke-width="1.2"/><path d="M2 15L9.5 7.7 15 13" fill="none" stroke="#000" stroke-width="1.6"/></svg><div class="e">Emotional State</div><div class="y">yyyy-MM-dd&nbsp;&nbsp; HH:mm</div></div>
 <div class="it" style="top:98.6px"><svg viewBox="0 0 16 16"><rect x="1" y="1" width="14" height="14" rx="1.8" fill="none" stroke="#000" stroke-width="1.6"/><circle cx="5" cy="5.2" r="1.3" fill="none" stroke="#000" stroke-width="1.2"/><path d="M2 15L9.5 7.7 15 13" fill="none" stroke="#000" stroke-width="1.6"/></svg><div class="e">Emotional State</div><div class="y">yyyy-MM-dd&nbsp;&nbsp; HH:mm</div></div>
 <div class="it" style="top:124.8px"><svg viewBox="0 0 16 16"><rect x="1" y="1" width="14" height="14" rx="1.8" fill="none" stroke="#000" stroke-width="1.6"/><circle cx="5" cy="5.2" r="1.3" fill="none" stroke="#000" stroke-width="1.2"/><path d="M2 15L9.5 7.7 15 13" fill="none" stroke="#000" stroke-width="1.6"/></svg><div class="e">Emotional State</div><div class="y">yyyy-MM-dd&nbsp;&nbsp; HH:mm</div></div>
 <div class="dt" style="left:52px;top:155.5px"></div><div class="dt" style="left:52px;top:162px"></div><div class="dt" style="left:52px;top:168.6px"></div>
 <div class="nv">
  <svg class="ni" style="left:7.6px" viewBox="0 0 12 10"><rect x=".7" y=".7" width="10.6" height="8.6" rx=".6" fill="none" stroke="#777" stroke-width="1.3"/><circle cx="3.3" cy="3.2" r="1" fill="#777"/><path d="M3.4 9L6 5.6 10.5 7.6" fill="none" stroke="#777" stroke-width="1.1"/></svg><div class="nl" style="left:12.6px">My Moods</div>
  <svg class="ni" style="left:36.6px" viewBox="0 0 12 10"><rect x=".7" y=".7" width="10.6" height="8.6" rx=".6" fill="none" stroke="#000" stroke-width="1.3"/><circle cx="3.3" cy="3.2" r="1" fill="#000"/><path d="M3.4 9L6 5.6 10.5 7.6" fill="none" stroke="#000" stroke-width="1.1"/></svg><div class="nl" style="left:41.6px;color:#000">Following</div>
  <svg class="ni" style="left:65px" viewBox="0 0 12 10"><rect x=".7" y=".7" width="10.6" height="8.6" rx=".6" fill="none" stroke="#777" stroke-width="1.3"/><circle cx="3.3" cy="3.2" r="1" fill="#777"/><path d="M3.4 9L6 5.6 10.5 7.6" fill="none" stroke="#777" stroke-width="1.1"/></svg><div class="nl" style="left:70px">Requests</div>
  <svg class="ni" style="left:93.8px" viewBox="0 0 12 10"><rect x=".7" y=".7" width="10.6" height="8.6" rx=".6" fill="none" stroke="#777" stroke-width="1.3"/><circle cx="3.3" cy="3.2" r="1" fill="#777"/><path d="M3.4 9L6 5.6 10.5 7.6" fill="none" stroke="#777" stroke-width="1.1"/></svg><div class="nl" style="left:98.8px">Profile</div>
 </div>
</div></div>

<!-- ROW 3 PHONE 1: FOLLOWER MOOD DIALOG -->
<div class="ph" style="left:116.5px;top:1076.5px">
<div class="w" style="left:39.5px;top:4.2px;width:3px;height:2.6px;border-radius:50%"></div><div class="w" style="left:47.4px;top:4.7px;width:27px;height:2.2px;border-radius:1px"></div><div class="w" style="left:78px;top:4.2px;width:3px;height:2.6px;border-radius:50%"></div><div class="w" style="left:84px;top:4.2px;width:3px;height:2.6px;border-radius:50%"></div><div class="w" style="left:98.6px;top:6px;width:4px;height:3.4px;border-radius:50%"></div>
<div class="w" style="left:46.8px;top:229.5px;width:28.5px;height:7.6px;border-radius:3.5px"></div>
<div class="sc" style="background:#898989">
 <div class="a" style="left:0;top:14.6px;width:100%;height:.6px;background:#444"></div>
 <div class="a" style="left:0;top:182.5px;width:100%;height:.6px;background:#444"></div>
 <div class="a" style="left:87px;top:3.5px;width:7px;height:1.3px;background:#000"></div>
 <div class="x" style="left:2px;top:194.5px;font-size:3.7px;color:#222">My Moods</div><div class="x" style="left:32px;top:194.2px;font-size:3.7px;color:#666">Following</div><div class="x" style="left:61px;top:194.2px;font-size:3.7px;color:#666">Requests</div><div class="x" style="left:93px;top:194.2px;font-size:3.7px;color:#666">Profile</div>
 <div class="a" style="left:3.5px;top:6.5px;width:106.5px;height:186.5px;background:#fff;border:.4px solid #333"></div>
 <svg class="a" style="left:7px;top:12.4px;width:5.5px;height:6.5px" viewBox="0 0 6 6"><path d="M.5.5l5 5M5.5.5l-5 5" stroke="#000" stroke-width=".9"/></svg>
 <div class="x" style="left:16px;top:11.5px;font-size:7px;font-weight:bold">Mood Information</div>
 <div class="x" style="left:7px;top:27.4px;font-size:4px;font-weight:bold">Emotional State</div>
 <svg class="a" style="left:7px;top:34.5px;width:12px;height:11.5px" viewBox="0 0 12 11"><rect x=".8" y=".8" width="10.4" height="9.4" rx=".6" fill="none" stroke="#000" stroke-width="1.6"/><circle cx="3.6" cy="3.4" r="1.1"/><path d="M3.6 9.5L6 6l4 2" fill="none" stroke="#000" stroke-width="1.2"/></svg>
 <div class="x" style="left:24px;top:37.8px;font-size:4px">State</div>
 <div class="x" style="left:7px;top:52.1px;font-size:4px;font-weight:bold">Date</div><div class="x" style="left:55.5px;top:52.1px;font-size:4px;font-weight:bold">Time</div>
 <div class="x" style="left:7px;top:59px;font-size:4px">yyyy-MM-dd</div><div class="x" style="left:55.5px;top:59px;font-size:4px">HH:mm</div>
 <div class="x" style="left:7px;top:69.4px;font-size:4px;font-weight:bold">Social Situation</div>
 <div class="x" style="left:7px;top:76.2px;font-size:4px">Situation</div>
 <div class="x" style="left:7px;top:86.5px;font-size:4px;font-weight:bold">Reason</div>
 <div class="x" style="left:7px;top:92.9px;font-size:4px">Reason</div>
 <div class="x" style="left:7px;top:124.6px;font-size:4px;font-weight:bold">Image</div><div class="x" style="left:63.5px;top:125px;font-size:4px;font-weight:bold">Location</div>
 <div class="bx" style="left:7.2px;top:131px;width:40.6px;height:56px"><svg class="a" style="left:11px;top:13px;width:18px;height:22px" viewBox="0 0 20 24"><path d="M1.5 1.5H13L18.5 7V22.5H1.5Z" fill="#fff" stroke="#000" stroke-width="2.6" stroke-linejoin="round"/><path d="M13 1.5V7H18.5" fill="none" stroke="#000" stroke-width="2"/><circle cx="6" cy="11" r="2.2"/><path d="M3.5 20.5L8 15l3 3 3-5 4 7.5z"/></svg><div class="x" style="left:0;width:100%;text-align:center;top:39.5px;font-size:3.8px">No Image</div></div>
 <div class="bx" style="left:63.5px;top:131px;width:40.6px;height:56px"><svg class="a" style="left:12.3px;top:14px;width:16px;height:19px" viewBox="0 0 16 24"><path d="M8 0C3.6 0 0 3.4 0 7.8 0 13 8 24 8 24s8-11 8-16.2C16 3.4 12.4 0 8 0z"/><circle cx="8" cy="7.6" r="2.8" fill="#ececec"/></svg><div class="x" style="left:0;width:100%;text-align:center;top:39.5px;font-size:3.8px">No location</div></div>
</div></div>

<!-- ROW 3 PHONE 2: FOLLOWING MAP -->
<div class="ph" style="left:506px;top:1076.5px">
<div class="w" style="left:39.5px;top:4.2px;width:3px;height:2.6px;border-radius:50%"></div><div class="w" style="left:47.4px;top:4.7px;width:27px;height:2.2px;border-radius:1px"></div><div class="w" style="left:78px;top:4.2px;width:3px;height:2.6px;border-radius:50%"></div><div class="w" style="left:84px;top:4.2px;width:3px;height:2.6px;border-radius:50%"></div><div class="w" style="left:98.6px;top:6px;width:4px;height:3.4px;border-radius:50%"></div>
<div class="w" style="left:46.8px;top:229.5px;width:28.5px;height:7.6px;border-radius:3.5px"></div>
<div class="sc" style="background:#dcdcdc">
 <div class="hd"><svg class="a" style="left:3px;top:4.3px;width:6px;height:6px" viewBox="0 0 6 6"><path d="M.5.5l5 5M5.5.5l-5 5" stroke="#000" stroke-width="1"/></svg><div class="ht" style="left:14px;font-size:5.6px">Following — Map</div></div>
 <svg class="a" style="left:5.5px;top:17.5px;width:101.5px;height:179px" viewBox="0 0 108 181" preserveAspectRatio="none"><rect width="108" height="181" fill="#a6cdf9" stroke="#3d5a88" stroke-width=".6"/><g fill="none" stroke="#fff" stroke-width="3.2"><path d="M0 13L40 16 80 19 108 22"/><path d="M16 0V30"/><path d="M84 0Q86 15 100 20"/><path d="M0 70L50 0"/><path d="M0 120L86 0"/><path d="M0 165L108 14"/><path d="M20 181L108 58"/><path d="M60 181L108 114"/><path d="M90 181L108 156"/><path d="M5 40L100 181"/><path d="M25 25L108 140"/><path d="M55 22L108 95"/><path d="M0 95L60 181"/><path d="M0 140L30 181"/><path d="M60 40L108 60"/></g><circle cx="17" cy="16" r="4.3" fill="#a6cdf9" stroke="#fff" stroke-width="2.6"/></svg>
 <div class="a" style="left:30.5px;top:64px;width:48px;height:14px;background:#eee;border:.5px solid #333;box-shadow:.8px .8px 0 #777;font-size:3.9px;text-align:center;line-height:13.5px">Emotional State</div>
 <svg class="a" style="left:51.5px;top:78px;width:6px;height:5px" viewBox="0 0 6 5"><path d="M0 0L3 5 6 0" fill="#eee" stroke="#333" stroke-width=".5"/></svg>
 <svg class="a" style="left:51px;top:88px;width:7.5px;height:11px" viewBox="0 0 16 24"><path d="M8 0C3.6 0 0 3.4 0 7.8 0 13 8 24 8 24s8-11 8-16.2C16 3.4 12.4 0 8 0z" fill="#c84a3c"/><circle cx="8" cy="7.6" r="3.3" fill="#fff" stroke="#9b352b" stroke-width="1.5"/></svg>
</div></div>

<!-- ROW 3 PHONE 3: REQUESTS -->
<div class="ph" style="left:891px;top:1076.5px">
<div class="w" style="left:39.5px;top:4.2px;width:3px;height:2.6px;border-radius:50%"></div><div class="w" style="left:47.4px;top:4.7px;width:27px;height:2.2px;border-radius:1px"></div><div class="w" style="left:78px;top:4.2px;width:3px;height:2.6px;border-radius:50%"></div><div class="w" style="left:84px;top:4.2px;width:3px;height:2.6px;border-radius:50%"></div><div class="w" style="left:98.6px;top:6px;width:4px;height:3.4px;border-radius:50%"></div>
<div class="w" style="left:46.8px;top:229.5px;width:28.5px;height:7.6px;border-radius:3.5px"></div>
<div class="sc" style="background:#ebebeb">
 <div class="hd"><div class="ht" style="left:2.5px;font-size:5.6px">Requests</div></div>
 <div class="a" style="left:3.5px;top:19px;width:106px;height:49.5px;background:#fff;box-shadow:.7px .9px 0 #b4b4b4"></div>
 <div class="x" style="left:7.5px;top:28.5px;font-size:5.6px">@Username</div>
 <div class="x" style="left:7px;top:41.1px;font-size:3.2px;color:#9a9a9a">wants to follow you!</div>
 <div class="x g" style="left:7.5px;top:53.2px;font-size:3.8px">DISMISS</div><div class="x g" style="left:77px;top:53.2px;font-size:3.8px">ACCEPT</div>
 <div class="a" style="left:3.5px;top:72.5px;width:106px;height:49.5px;background:#fff;box-shadow:.7px .9px 0 #b4b4b4"></div>
 <div class="x" style="left:7.5px;top:81.8px;font-size:5.6px">@Username</div>
 <div class="x" style="left:7px;top:94.5px;font-size:3.2px;color:#9a9a9a">wants to follow you!</div>
 <div class="x g" style="left:7.5px;top:106.5px;font-size:3.8px">DISMISS</div><div class="x g" style="left:77px;top:106.5px;font-size:3.8px">ACCEPT</div>
 <div class="dt" style="left:54px;top:129.3px"></div><div class="dt" style="left:54px;top:136.3px"></div><div class="dt" style="left:54px;top:143.3px"></div>
 <div class="nv">
  <svg class="ni" style="left:7.6px" viewBox="0 0 12 10"><rect x=".7" y=".7" width="10.6" height="8.6" rx=".6" fill="none" stroke="#777" stroke-width="1.3"/><circle cx="3.3" cy="3.2" r="1" fill="#777"/><path d="M3.4 9L6 5.6 10.5 7.6" fill="none" stroke="#777" stroke-width="1.1"/></svg><div class="nl" style="left:12.6px">My Moods</div>
  <svg class="ni" style="left:36.6px" viewBox="0 0 12 10"><rect x=".7" y=".7" width="10.6" height="8.6" rx=".6" fill="none" stroke="#777" stroke-width="1.3"/><circle cx="3.3" cy="3.2" r="1" fill="#777"/><path d="M3.4 9L6 5.6 10.5 7.6" fill="none" stroke="#777" stroke-width="1.1"/></svg><div class="nl" style="left:41.6px">Following</div>
  <svg class="ni" style="left:65px" viewBox="0 0 12 10"><rect x=".7" y=".7" width="10.6" height="8.6" rx=".6" fill="none" stroke="#000" stroke-width="1.3"/><circle cx="3.3" cy="3.2" r="1" fill="#000"/><path d="M3.4 9L6 5.6 10.5 7.6" fill="none" stroke="#000" stroke-width="1.1"/></svg><div class="nl" style="left:70px;color:#000">Requests</div>
  <svg class="ni" style="left:93.8px" viewBox="0 0 12 10"><rect x=".7" y=".7" width="10.6" height="8.6" rx=".6" fill="none" stroke="#777" stroke-width="1.3"/><circle cx="3.3" cy="3.2" r="1" fill="#777"/><path d="M3.4 9L6 5.6 10.5 7.6" fill="none" stroke="#777" stroke-width="1.1"/></svg><div class="nl" style="left:98.8px">Profile</div>
 </div>
</div></div>

<!-- ROW 3 PHONE 4: PROFILE -->
<div class="ph" style="left:1280.5px;top:1076.5px">
<div class="w" style="left:39.5px;top:4.2px;width:3px;height:2.6px;border-radius:50%"></div><div class="w" style="left:47.4px;top:4.7px;width:27px;height:2.2px;border-radius:1px"></div><div class="w" style="left:78px;top:4.2px;width:3px;height:2.6px;border-radius:50%"></div><div class="w" style="left:84px;top:4.2px;width:3px;height:2.6px;border-radius:50%"></div><div class="w" style="left:98.6px;top:6px;width:4px;height:3.4px;border-radius:50%"></div>
<div class="w" style="left:46.8px;top:229.5px;width:28.5px;height:7.6px;border-radius:3.5px"></div>
<div class="sc">
 <div class="hd"><div class="ht" style="left:2.5px;font-size:5.6px">Profile</div>
  <svg class="a" style="left:101.5px;top:2.5px;width:8px;height:9.5px" viewBox="0 0 8 10"><path d="M4.5 2.5V.7H.7v8.6h3.8V7.5" fill="none" stroke="#000" stroke-width="1.2"/><path d="M3 5h4.5M5.8 3.2L7.6 5 5.8 6.8" fill="none" stroke="#000" stroke-width="1"/></svg>
 </div>
 <div class="x" style="left:3.5px;top:21.5px;font-size:9.2px;font-weight:bold">@Username</div>
 <div class="x" style="left:3.5px;top:39.2px;font-size:4.7px">First Name&nbsp; Last Name</div>
 <div class="x" style="left:3.5px;top:61.5px;font-size:5.8px;font-weight:bold">Request to Follow</div>
 <div class="x" style="left:5px;top:75.6px;font-size:4.8px;color:#888">Username</div>
 <div class="a" style="left:4.5px;top:85.3px;width:63.5px;height:.5px;background:#ccc"></div>
 <div class="a" style="left:73.5px;top:72px;width:35px;height:13.5px;background:#eef0f3;border-radius:1px;font-size:3.8px;color:#6b7390;text-align:center;line-height:13.5px">REQUEST</div>
 <div class="nv">
  <svg class="ni" style="left:7.6px" viewBox="0 0 12 10"><rect x=".7" y=".7" width="10.6" height="8.6" rx=".6" fill="none" stroke="#777" stroke-width="1.3"/><circle cx="3.3" cy="3.2" r="1" fill="#777"/><path d="M3.4 9L6 5.6 10.5 7.6" fill="none" stroke="#777" stroke-width="1.1"/></svg><div class="nl" style="left:12.6px">My Moods</div>
  <svg class="ni" style="left:36.6px" viewBox="0 0 12 10"><rect x=".7" y=".7" width="10.6" height="8.6" rx=".6" fill="none" stroke="#777" stroke-width="1.3"/><circle cx="3.3" cy="3.2" r="1" fill="#777"/><path d="M3.4 9L6 5.6 10.5 7.6" fill="none" stroke="#777" stroke-width="1.1"/></svg><div class="nl" style="left:41.6px">Following</div>
  <svg class="ni" style="left:65px" viewBox="0 0 12 10"><rect x=".7" y=".7" width="10.6" height="8.6" rx=".6" fill="none" stroke="#777" stroke-width="1.3"/><circle cx="3.3" cy="3.2" r="1" fill="#777"/><path d="M3.4 9L6 5.6 10.5 7.6" fill="none" stroke="#777" stroke-width="1.1"/></svg><div class="nl" style="left:70px">Requests</div>
  <svg class="ni" style="left:93.8px" viewBox="0 0 12 10"><rect x=".7" y=".7" width="10.6" height="8.6" rx=".6" fill="none" stroke="#000" stroke-width="1.3"/><circle cx="3.3" cy="3.2" r="1" fill="#000"/><path d="M3.4 9L6 5.6 10.5 7.6" fill="none" stroke="#000" stroke-width="1.1"/></svg><div class="nl" style="left:98.8px;color:#000">Profile</div>
 </div>
</div></div>

</div>
<script>
(function(){
  var s=document.getElementById('s');
  var w=window.innerWidth||document.documentElement.clientWidth;
  var h=window.innerHeight||document.documentElement.clientHeight;
  if(w>100&&h>100){
    var z=Math.min(w/1530,h/1574);
    s.style.zoom=z;
  }
})();
</script>
</body></html>
